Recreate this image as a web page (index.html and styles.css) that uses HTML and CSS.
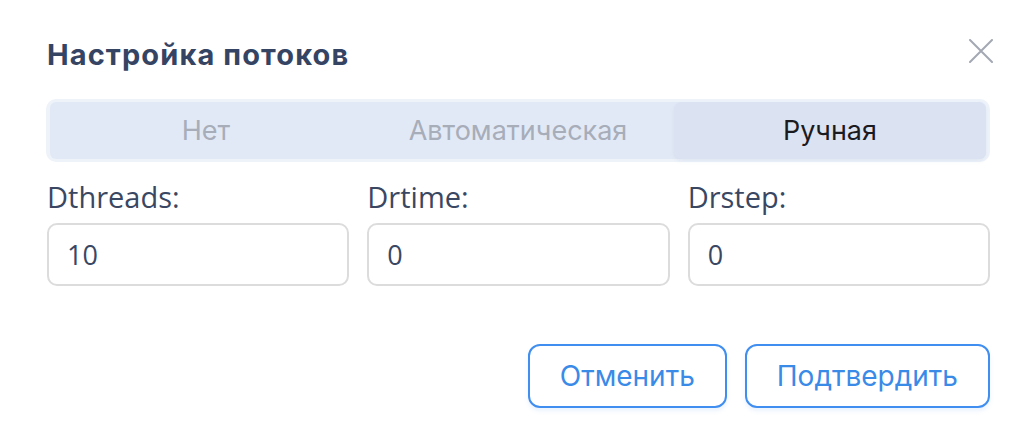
FILE: index.html
```html
<!DOCTYPE html>
<html lang="ru">
<head>
<meta charset="utf-8">
<title>Настройка потоков</title>
<link rel="stylesheet" href="styles.css">
</head>
<body>
<div class="dialog">
  <div class="header">
    <h1 class="title">Настройка потоков</h1>
    <button class="close" aria-label="Закрыть">
      <svg width="24" height="24" viewBox="0 0 24 24"><path d="M1 1 L23 23 M23 1 L1 23" stroke="#a3a8b3" stroke-width="2" stroke-linecap="round" fill="none"/></svg>
    </button>
  </div>
  <div class="segmented">
    <div class="seg-track">
      <div class="seg-item">Нет</div>
      <div class="seg-item">Автоматическая</div>
      <div class="seg-item active">Ручная</div>
    </div>
  </div>
  <div class="fields">
    <label class="field">
      <span class="label">Dthreads:</span>
      <span class="input">10</span>
    </label>
    <label class="field">
      <span class="label">Drtime:</span>
      <span class="input">0</span>
    </label>
    <label class="field">
      <span class="label">Drstep:</span>
      <span class="input">0</span>
    </label>
  </div>
  <div class="actions">
    <button class="btn">Отменить</button>
    <button class="btn">Подтвердить</button>
  </div>
</div>
</body>
</html>
```

FILE: styles.css
```css
* { box-sizing: border-box; }
html, body { margin: 0; padding: 0; background: #ffffff; }
body { width: 1036px; height: 439px; overflow: hidden; }

.dialog {
  padding: 37px 46px 0 47px;
  font-family: Inter, "Noto Sans", sans-serif;
}

.header {
  display: flex;
  justify-content: space-between;
  align-items: flex-start;
  height: 36px;
}
.title {
  margin: 0;
  font-size: 29px;
  line-height: 36px;
  font-weight: 700;
  letter-spacing: 1.1px;
  color: #364463;
}
.close {
  border: 0;
  background: none;
  padding: 0;
  margin: 2px -3px 0 0;
  width: 24px;
  height: 24px;
  cursor: pointer;
}
.close svg { display: block; }

.segmented {
  margin-top: 26px;
  margin-left: -1px;
  background: #eef3fa;
  border-radius: 10px;
  padding: 3px 4px;
}
.seg-track {
  display: grid;
  grid-template-columns: 1fr 1fr 1fr;
  background: #e2e9f6;
  border-radius: 6px;
  height: 57px;
}
.seg-item {
  display: flex;
  align-items: center;
  justify-content: center;
  font-size: 27px;
  color: #a7adb9;
  border-radius: 8px;
}
.seg-item.active {
  background: #dbe3f2;
  color: #1b1b1f;
  box-shadow: 0 2px 4px rgba(120, 140, 180, 0.12);
}

.fields {
  margin-top: 16px;
  display: grid;
  grid-template-columns: repeat(3, 1fr);
  column-gap: 18px;
  font-family: "Open Sans", "Noto Sans", sans-serif;
}
.field { display: flex; flex-direction: column; gap: 7px; }
.label {
  font-size: 29px;
  line-height: 38px;
  color: #3a4763;
}
.input {
  height: 63px;
  border: 2px solid #dcdcdc;
  border-radius: 10px;
  padding: 0 18px;
  display: flex;
  align-items: center;
  font-size: 27px;
  color: #3a4763;
}

.actions {
  margin-top: 58px;
  display: flex;
  justify-content: flex-end;
  gap: 18px;
}
.btn {
  height: 64px;
  padding: 0 30px;
  border: 2px solid #3f8ef0;
  border-radius: 12px;
  background: #ffffff;
  color: #3a8ae8;
  font-family: Inter, "Noto Sans", sans-serif;
  font-size: 28px;
  box-shadow: 0 3px 4px rgba(63, 142, 240, 0.10);
}
```
